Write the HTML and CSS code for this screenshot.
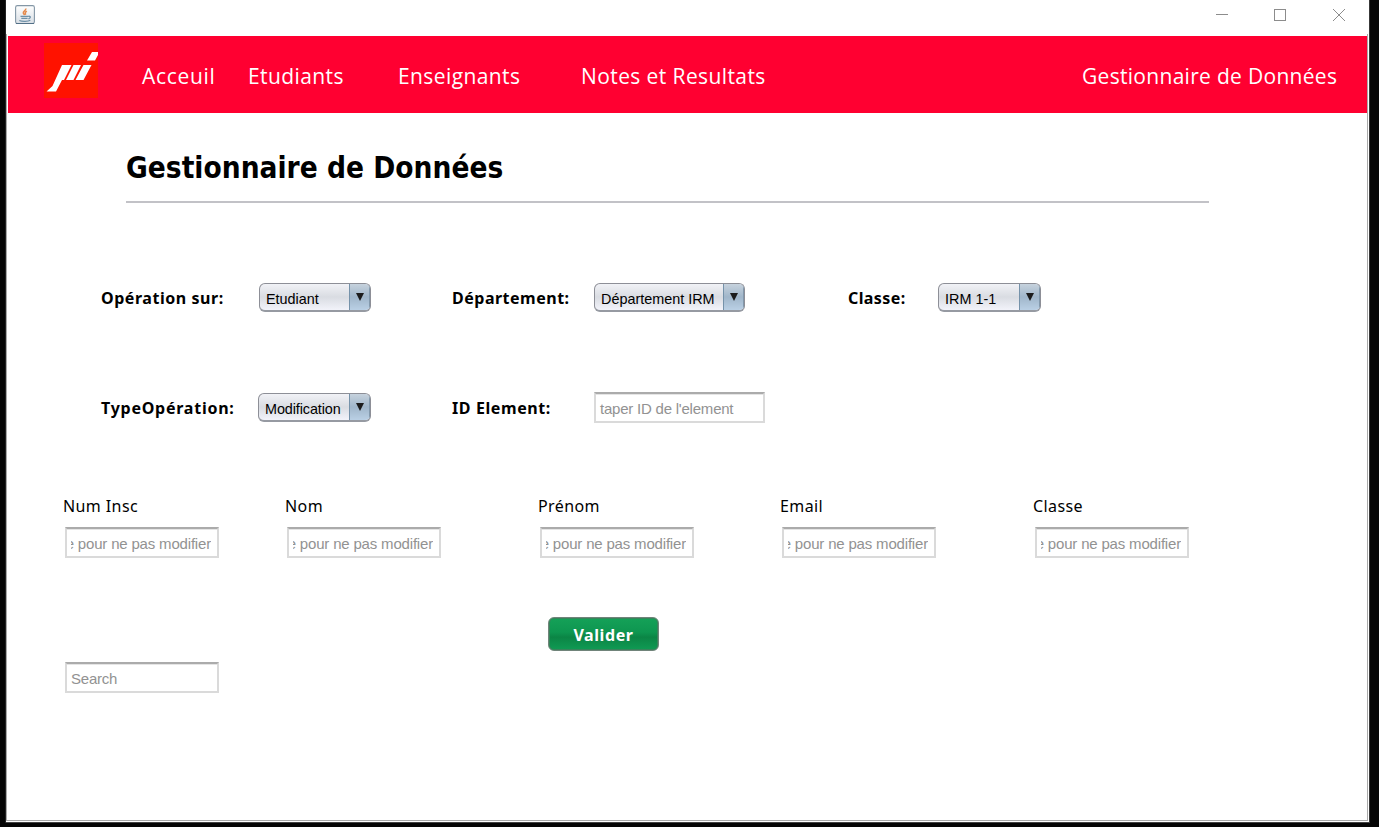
FILE: index.html
```html
<!DOCTYPE html>
<html lang="fr">
<head>
<meta charset="utf-8">
<title>Gestionnaire de Données</title>
<link rel="stylesheet" href="styles.css">
</head>
<body>
<div class="window">
  <header class="titlebar">
    <svg class="java" width="20" height="20" viewBox="0 0 20 20" fill="none">
      <defs><linearGradient id="jb" x1="0" y1="0" x2="0" y2="1"><stop offset="0" stop-color="#fff"/><stop offset="1" stop-color="#d9dfe5"/></linearGradient></defs>
      <rect x=".6" y=".6" width="18.8" height="17.9" rx="1.8" fill="url(#jb)" stroke="#8497a6" stroke-width="1.1"/>
      <path d="M1 18.500h18" stroke="#527087"/>
      <path d="M10.8 3.500c.5 2-3 2.700-2.500 4.600.2.800 1 1.100 1.200 2M11.800 6.200c-2 1.300-1.900 2-.9 3.400" stroke="#e58a4c" stroke-width="1.500"/>
      <path d="M5.500 11.300h8M6.300 13.300h6.300M4.300 15.500c3 1.300 9 1 11-.3M13.600 11.300c2.500-.4 2.200 1.900-.2 2.500" stroke="#6f91a8" stroke-width="1.300"/>
    </svg>
    <svg class="controls" width="130" height="14" viewBox="0 0 130 14" fill="none" stroke="#8c8c8c">
      <path d="M0 7.500h12"/><rect x="58.500" y="2.500" width="11" height="11"/><path d="M117 2l12 12M129 2l-12 12"/>
    </svg>
  </header>
  <main class="content">
    <nav class="nav">
      <svg class="logo" width="54" height="55" viewBox="0 0 54 55">
        <path fill="#ff1200" d="M0 0h54v55H0z"/>
        <path fill="#fff" d="M18 22H27.500L20 37H18L12 48.500H2.500L8.500 43zM29.500 22H37L29.500 37H22zM39.500 22H47.500L39.500 37H31.500zM48 9h6v3l-3 5.500h-8z"/>
      </svg>
      <a class="n1">Acceuil</a><a class="n2">Etudiants</a><a class="n3">Enseignants</a><a class="n4">Notes et Resultats</a><a class="n5">Gestionnaire de Données</a>
    </nav>
    <h1 class="heading"><span>Gestionnaire de Données</span></h1>
    <section class="row filters">
      <label class="l1">Opération sur:</label>
      <div class="combo c1"><span>Etudiant</span><i><svg width="8" height="8"><path d="M0 0h8L4 8z"/></svg></i></div>
      <label class="l2">Département:</label>
      <div class="combo c2"><span>Département IRM</span><i><svg width="8" height="8"><path d="M0 0h8L4 8z"/></svg></i></div>
      <label class="l3">Classe:</label>
      <div class="combo c3"><span>IRM 1-1</span><i><svg width="8" height="8"><path d="M0 0h8L4 8z"/></svg></i></div>
    </section>
    <section class="row operation">
      <label class="l4">TypeOpération:</label>
      <div class="combo c4"><span>Modification</span><i><svg width="8" height="8"><path d="M0 0h8L4 8z"/></svg></i></div>
      <label class="l5">ID Element:</label>
      <div class="field wide"><span>taper ID de l'element</span></div>
    </section>
    <section class="fields">
      <div class="cell"><label>Num Insc</label><div class="field clip"><span>e pour ne pas modifier</span></div></div>
      <div class="cell"><label>Nom</label><div class="field clip"><span>e pour ne pas modifier</span></div></div>
      <div class="cell"><label>Prénom</label><div class="field clip"><span>e pour ne pas modifier</span></div></div>
      <div class="cell"><label>Email</label><div class="field clip"><span>e pour ne pas modifier</span></div></div>
      <div class="cell"><label>Classe</label><div class="field clip"><span>e pour ne pas modifier</span></div></div>
    </section>
    <button class="submit"><span>Valider</span></button>
    <div class="field search"><span>Search</span></div>
  </main>
</div>
</body>
</html>
```
FILE: styles.css
```css
* { box-sizing: border-box; }
body { margin: 0; height: 827px; background: #050505; overflow: hidden; }
.window { width: 1364px; height: 823px; margin-left: 6px; background: #fff; border-right: 1px solid #383838; border-bottom: 1px solid #444; box-shadow: -1px 0 #222; }
.titlebar { height: 34px; padding: 5px 23px 0 9px; display: flex; justify-content: space-between; }
.controls { margin-top: 2px; }
.content { width: 1362px; height: 787px; border: 1px solid #aaa; border-top: 0; padding: 2px 0 0 1px; display: flex; flex-direction: column; }
.nav { width: 1359px; height: 77px; background: #ff0031; display: flex; padding: 7px 0 0 36px; color: #fff; font: 21px/30px "Open Sans", "Noto Sans", sans-serif; white-space: nowrap; }
.nav a { padding-top: 18px; }
.n1 { margin-left: 44px; width: 106px; letter-spacing: .7px; }
.n2 { width: 150px; letter-spacing: .4px; }
.n3 { width: 183px; letter-spacing: .4px; }
.n4 { width: 501px; letter-spacing: .4px; }
.n5 { letter-spacing: .3px; }
.heading { margin: 0 0 0 118px; width: 1083px; height: 90px; padding-top: 36px; border-bottom: 2px solid #c2c2c7; font: bold 29.5px/38px "DejaVu Sans Condensed", "DejaVu Sans", sans-serif; font-stretch: condensed; letter-spacing: .02px; white-space: nowrap; }
.row { display: flex; align-items: flex-start; font: bold 16px/24px "Noto Sans", sans-serif; white-space: nowrap; }
.row label { padding-top: 3px; }
.filters { margin: 80px 0 0 93px; height: 110px; }
.operation { margin-left: 93px; height: 100px; }
.l1 { width: 158px; letter-spacing: .55px; }
.l2 { width: 142px; margin-left: 81px; letter-spacing: .5px; }
.l3 { width: 90px; margin-left: 103px; letter-spacing: .4px; }
.l4 { width: 157px; letter-spacing: .75px; }
.l5 { width: 142px; margin-left: 81px; letter-spacing: .6px; }
.combo { height: 29px; border: 1px solid #8d8f97; border-bottom: 2px solid #969aa2; border-radius: 6px; display: flex; background: linear-gradient(#f1f2f6, #d9dce2 50%, #f2f3fa); font: 14.4px/30px "Liberation Sans", sans-serif; overflow: hidden; }
.combo span { flex: 1; padding-left: 6px; }
.combo i { width: 21px; border-left: 1px solid #7592aa; background: linear-gradient(#c6d2dd, #a0b6ca 50%, #bad0e5); box-shadow: inset -1px 0 #8298ac; display: flex; justify-content: center; padding-top: 9px; fill: #1c1c1c; }
.c1 { width: 112px; }
.c2 { width: 151px; }
.c3 { width: 103px; }
.c4 { width: 113px; letter-spacing: -.1px; }
.field { width: 154px; height: 31px; border: 2px solid #dadada; border-top: 2px solid #ababab; box-shadow: inset 0 1px #e5e5e5; background: #fff; color: #929292; font: 15px/30px "Liberation Sans", sans-serif; letter-spacing: -.22px; padding: 0 4px; white-space: nowrap; }
.wide { width: 171px; margin-top: -1px; }
.fields { margin-left: 55px; display: grid; grid-template-columns: 222px 253px 242px 253px 160px; }
.cell label { display: block; height: 34px; padding-top: 1px; font: 16px/24px "Noto Sans", sans-serif; letter-spacing: .4px; }
.cell .field { margin-left: 2px; }
.clip { display: flex; justify-content: flex-end; padding: 0 6px 0 4px; }
.clip span { width: 140px; display: flex; justify-content: flex-end; overflow: hidden; letter-spacing: -.18px; }
.submit { margin: 59px 0 0 540px; width: 111px; height: 34px; padding: 0; border: 1px solid #70847a; border-radius: 6px; background: linear-gradient(#15a158, #0e9650 45%, #0b8545 60%, #109b54); box-shadow: inset 0 0 0 1px #38845b; color: #fff; font: bold 16px/34px "Noto Sans", sans-serif; letter-spacing: .6px; }
.submit span { display: block; }
.search { margin: 11px 0 0 57px; }
```
